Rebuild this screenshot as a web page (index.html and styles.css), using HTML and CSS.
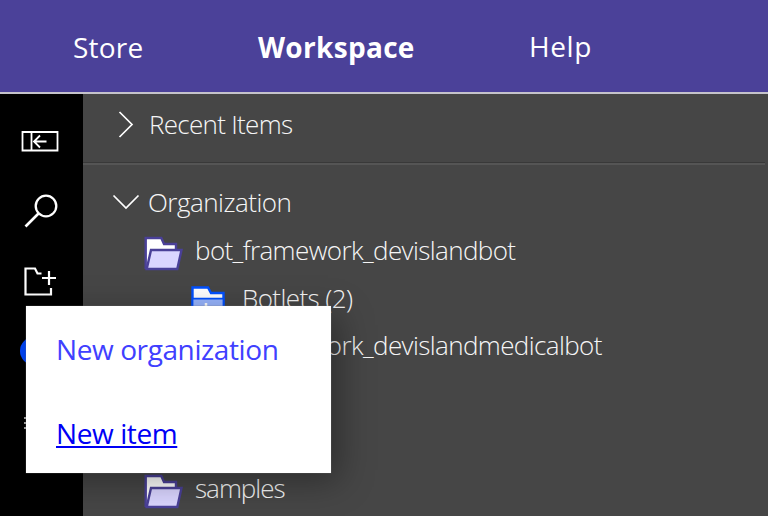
FILE: index.html
```
<!DOCTYPE html>
<html lang="en">
<head>
<meta charset="utf-8">
<title>Workspace</title>
<link rel="stylesheet" href="styles.css">
</head>
<body>
<svg class="defs" width="0" height="0" aria-hidden="true">
  <symbol id="folder" viewBox="0 0 40 35">
    <path d="M2.700 33V2H18.300L21 8H33V14" fill="#fff" stroke="#4a4098" stroke-width="2.400"/>
    <path d="M8 14H38.500L34.300 33H3.700Z" fill="#dad5ff" stroke="#4a4098" stroke-width="2.400"/>
  </symbol>
</svg>
<header class="topbar">
  <nav class="nav">
    <a class="nav-item store">Store</a>
    <a class="nav-item active">Workspace</a>
    <a class="nav-item help">Help</a>
  </nav>
</header>
<div class="body">
  <aside class="rail">
    <svg class="icon-collapse" width="38" height="21" viewBox="0 0 38 21"><path d="M1.500 1H36.500V19.500H1.500ZM10.500 1V19.500M25.500 10.500H13M19 4.500L13 10.500L19 16.500" fill="none" stroke="#fff" stroke-width="1.800"/></svg>
    <svg class="icon-search" width="34" height="34" viewBox="0 0 34 34"><circle cx="22" cy="12" r="10.300" fill="none" stroke="#fff" stroke-width="2.300"/><path d="M14.500 19.500L1.500 32.500" stroke="#fff" stroke-width="2.600"/></svg>
    <svg class="icon-add" width="34" height="30" viewBox="0 0 34 30"><path d="M18.500 7.500H14.500L12 2.500H2.500V28.500H28V22M26 5V19M19 12H33" fill="none" stroke="#fff" stroke-width="2.200"/></svg>
    <span class="dot"></span>
    <span class="list-mark"></span>
  </aside>
  <main class="panel">
    <section class="recent">
      <svg class="chev-right" width="18" height="28" viewBox="0 0 18 28"><path d="M2.500 2L15 14.500L2.500 27" fill="none" stroke="#fff" stroke-width="1.700"/></svg>
      <span class="label recent-label">Recent Items</span>
    </section>
    <section class="org">
      <div class="org-head">
        <svg class="chev-down" width="28" height="18" viewBox="0 0 28 18"><path d="M1.500 2.500L14 15L26.500 2.500" fill="none" stroke="#fff" stroke-width="1.700"/></svg>
        <span class="label org-label">Organization</span>
      </div>
      <ul class="tree">
        <li class="row"><svg class="folder"><use href="#folder"/></svg><span class="label bot">bot_framework_devislandbot</span></li>
        <li class="row child">
          <svg class="botlet" width="34" height="30" viewBox="0 0 34 30"><path d="M1.500 29V1.500H17L20 7H32.500V29Z" fill="#fff" stroke="#0050ff" stroke-width="2.400"/><path d="M1.500 12.700H32.500V29H1.500Z" fill="#99b6ff" stroke="#0050ff" stroke-width="1.800"/><path d="M15 17V28M9.500 22.500H20.500" stroke="#fff" stroke-width="2.500"/></svg>
          <span class="label botlets">Botlets (2)</span>
        </li>
        <li class="row"><svg class="folder"><use href="#folder"/></svg><span class="label medical">bot_framework_devislandmedicalbot</span></li>
        <li class="row"></li>
        <li class="row"></li>
        <li class="row"><svg class="folder"><use href="#folder"/></svg><span class="label samples">samples</span></li>
      </ul>
    </section>
  </main>
</div>
<div class="menu">
  <a class="menu-item new-org">New organization</a>
  <a class="menu-item new-item">New item</a>
</div>
</body>
</html>
```
FILE: styles.css
```
* { box-sizing: border-box; }
body { margin: 0; width: 768px; height: 516px; overflow: hidden; position: relative; background: #464646; font-family: "Open Sans", "Noto Sans", sans-serif; }
svg { display: block; flex: none; }
.defs { position: absolute; }
.topbar { height: 94px; background: #4b4199; border-bottom: 2px solid #c5c3cb; }
.nav { display: flex; height: 92px; padding: 27px 0 0 73px; color: #fff; }
.nav-item { flex: none; font-size: 28px; line-height: 40px; white-space: nowrap; }
.store { width: 185px; letter-spacing: 0.2px; }
.active { width: 271px; font-weight: 700; letter-spacing: 0.3px; }
.help { margin-top: -1px; letter-spacing: 0.6px; }
.body { display: flex; height: 422px; }
.rail { width: 83px; flex: none; background: #000; padding-top: 37px; }
.icon-collapse { margin-left: 21px; }
.icon-search { margin: 42px 0 0 24px; }
.icon-add { margin: 38px 0 0 23px; }
.dot { display: block; width: 28px; height: 28px; border-radius: 50%; background: #0047ff; margin: 41px 0 0 20px; }
.list-mark { display: block; width: 2px; height: 14px; margin: 52px 0 0 24px; background: repeating-linear-gradient(#aaa 0 2px, transparent 2px 5px); }
.panel { flex: 1; background: #464646; }
.recent { height: 69px; padding: 16px 0 0 34px; display: flex; border-bottom: 1px solid #393939; margin-right: 3px; }
.org { border-top: 2px solid #555; margin-right: 3px; padding-top: 21px; }
.label { color: #f6f6f6; font-size: 26px; font-weight: 300; line-height: 34px; white-space: nowrap; }
.recent .label { margin: -3px 0 0 14px; }
.recent-label { letter-spacing: -0.7px; }
.org-head { display: flex; height: 49px; padding-left: 29px; }
.chev-down { margin-top: 7px; }
.org-head .label { margin: -1px 0 0 8px; }
.org-label { letter-spacing: -0.5px; }
.tree { list-style: none; margin: 0; padding: 0 0 0 60px; }
.row { display: flex; height: 47.6px; }
.folder { width: 40px; height: 35px; margin-top: 1px; }
.row .label { margin: -2px 0 0 12px; }
.child { padding-left: 48px; }
.botlet { margin-top: 3px; }
.child .label { margin-left: 17px; }
.bot, .medical { letter-spacing: -0.6px; }
.botlets { letter-spacing: -0.6px; }
.samples { letter-spacing: -1px; }
.menu { position: absolute; left: 26px; top: 306px; width: 305px; height: 167px; padding: 23px 31px; display: flex; flex-direction: column; gap: 44px; background: #fff; box-shadow: 0 0 1px #777, 8px 8px 32px rgba(0,0,0,.35); }
.menu-item { align-self: flex-start; margin-left: -1px; font-size: 28px; line-height: 40px; white-space: nowrap; }
.new-org { color: #4040ff; letter-spacing: -0.4px; }
.new-item { color: #0000f5; text-decoration: underline; text-decoration-thickness: 2px; text-underline-offset: 2px; letter-spacing: -0.4px; }
```
